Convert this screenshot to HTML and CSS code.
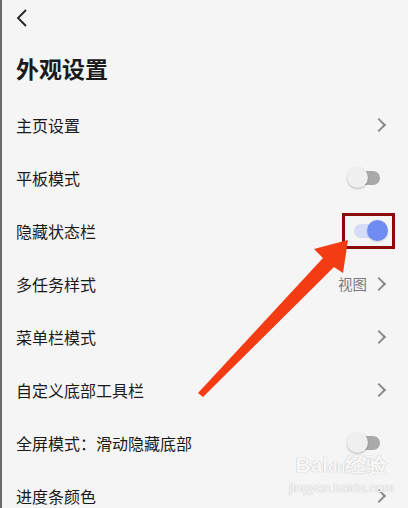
FILE: index.html
```html
<!DOCTYPE html>
<html>
<head>
<meta charset="utf-8">
<link rel="stylesheet" href="styles.css">
</head>
<body>
<div class="page">
	<div class="topbar">
		<svg class="back" width="14" height="20" viewBox="0 0 14 20"><path d="M11 2 L3 10 L11 18" fill="none" stroke="#222" stroke-width="1.8"/></svg>
	</div>
	<h1 class="title">外观设置</h1>

	<ul class="settings">
		<li class="row"><span class="label">主页设置</span><span class="chev"></span></li>
		<li class="row"><span class="label">平板模式</span><span class="switch"><span class="knob"></span></span></li>
		<li class="row"><span class="label">隐藏状态栏</span><span class="switch on"><span class="knob"></span></span></li>
		<li class="row"><span class="label">多任务样式</span><span class="value">视图</span><span class="chev"></span></li>
		<li class="row"><span class="label">菜单栏模式</span><span class="chev"></span></li>
		<li class="row"><span class="label">自定义底部工具栏</span><span class="chev"></span></li>
		<li class="row"><span class="label">全屏模式：滑动隐藏底部</span><span class="switch"><span class="knob"></span></span></li>
		<li class="row"><span class="label">进度条颜色</span><span class="chev"></span></li>
	</ul>

	<div class="mark"></div>
	<svg class="arrow" width="408" height="508" viewBox="0 0 408 508">
		<polygon points="348,240 314,249 323,258 198,393 203,397 334,267 343,273" fill="#f43c14"/>
	</svg>
	<div class="watermark">
		<span class="wm-logo">Bai<span class="wm-du">du</span>经验</span>
		<span class="wm-url">jingyan.baidu.com</span>
	</div>
</div>
</body>
</html>
```
FILE: styles.css
```css
html, body {
	margin: 0;
	padding: 0;
}

body {
	background: #f5f5f5;
	font-family: "Noto Sans CJK SC", "Noto Sans", sans-serif;
	color: #1a1a1a;
}

.page {
	position: relative;
	width: 408px;
	height: 508px;
	overflow: hidden;
	border-left: 2px solid #6a6a6a;
	box-sizing: border-box;
}

.topbar {
	height: 38px;
	padding: 8px 0 0 13px;
	box-sizing: border-box;
}

.back {
	display: block;
}

.title {
	margin: 0;
	padding-left: 14px;
	font-size: 23px;
	font-weight: bold;
	line-height: 60px;
	height: 60px;
}

.settings {
	list-style-type: none;
	margin: 0;
	padding: 0;
}

.row {
	display: flex;
	align-items: center;
	height: 53px;
	padding: 0 22px 0 14px;
}

.label {
	flex: 1;
	font-size: 16px;
}

.value {
	font-size: 14.5px;
	color: #7a7a7a;
	margin-right: 7px;
}

.chev {
	width: 8px;
	height: 8px;
	border-top: 2px solid #8a8a8a;
	border-right: 2px solid #8a8a8a;
	transform: rotate(45deg);
	margin-right: 2px;
}

.switch {
	position: relative;
	width: 33px;
	height: 22px;
	margin-right: 6px;
}

.switch::before {
	content: "";
	position: absolute;
	left: 5px;
	right: 0;
	top: 4px;
	height: 14px;
	border-radius: 7px;
	background: #a9a9a9;
}

.knob {
	position: absolute;
	left: 0;
	top: 0;
	width: 21px;
	height: 21px;
	border-radius: 50%;
	background: #efefef;
	box-shadow: 0 1px 2px rgba(0, 0, 0, 0.25);
}

.switch.on {
	width: 34px;
	margin-right: -2px;
}

.switch.on::before {
	left: 0;
	right: 8px;
	background: #d5dcf8;
}

.switch.on .knob {
	left: 13px;
	background: #6f8cf2;
	box-shadow: 0 1px 2px rgba(0, 0, 0, 0.15);
}

.mark {
	position: absolute;
	left: 340px;
	top: 213px;
	width: 47px;
	height: 30px;
	border: 3px solid #8b0a0a;
}

.arrow {
	position: absolute;
	left: -2px;
	top: 0;
}

.watermark {
	position: absolute;
	left: 287px;
	top: 452px;
	display: flex;
	flex-direction: column;
	align-items: center;
	color: rgba(255, 255, 255, 0.9);
	text-shadow: 0 0 1px #c4c4c4, 0 0 1px #c4c4c4;
	font-family: "Liberation Sans", sans-serif;
}

.wm-logo {
	font-size: 21px;
	font-weight: bold;
	line-height: 26px;
}

.wm-du {
	font-size: 14px;
}

.wm-url {
	font-size: 13px;
	line-height: 16px;
}
```
